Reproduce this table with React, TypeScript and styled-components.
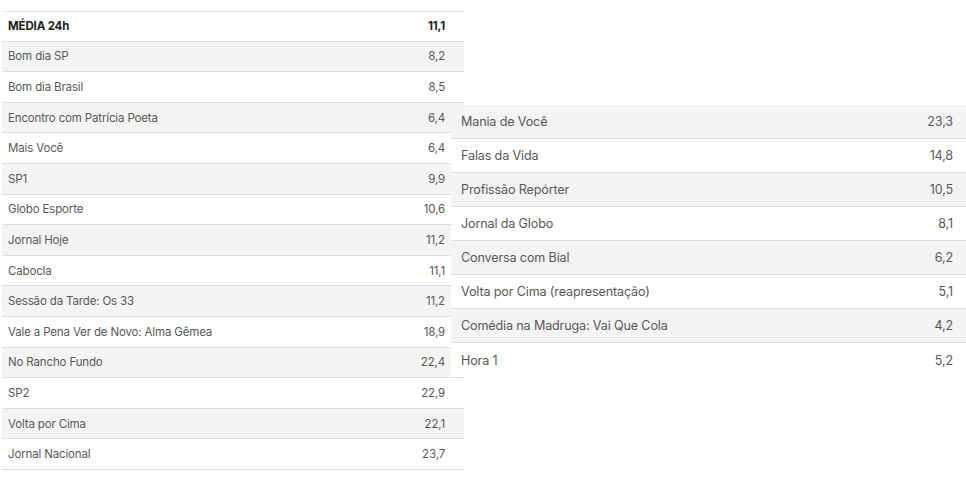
import React from "react";
import styled, { createGlobalStyle } from "styled-components";

const Global = createGlobalStyle`
  html, body { margin: 0; padding: 0; background: #ffffff; }
  body { font-family: Inter, "Noto Sans", "Liberation Sans", sans-serif; }
`;

const Page = styled.div`
  display: flex;
  align-items: flex-start;
  width: 966px;
  height: 483px;
  overflow: hidden;
`;

const Table = styled.div<{ $width: number; $top: number; $left: number }>`
  position: relative;
  width: ${(p) => p.$width}px;
  margin-top: ${(p) => p.$top}px;
  margin-left: ${(p) => p.$left}px;
  background: #ffffff;
  display: flex;
  flex-direction: column;
  flex-shrink: 0;
`;

const Row = styled.div<{
  $h: number;
  $shade: boolean;
  $size: number;
  $pl: number;
  $pr: number;
  $head?: boolean;
  $line: boolean;
  $topLine?: boolean;
}>`
  box-sizing: border-box;
  height: ${(p) => p.$h}px;
  display: flex;
  align-items: center;
  justify-content: space-between;
  padding: 0 ${(p) => p.$pr}px 0 ${(p) => p.$pl}px;
  background: ${(p) => (p.$shade ? "#f4f4f4" : "#ffffff")};
  border-bottom: ${(p) => (p.$line ? "1px solid #dedede" : "none")};
  border-top: ${(p) => (p.$topLine ? "1px solid #e6e6e6" : "none")};
  font-size: ${(p) => p.$size}px;
  font-weight: ${(p) => (p.$head ? 700 : 400)};
  color: ${(p) => (p.$head ? "#222222" : "#585858")};
  letter-spacing: -0.15px;
`;

const Label = styled.span``;
const Value = styled.span``;

const left: [string, string][] = [
  ["MÉDIA 24h", "11,1"],
  ["Bom dia SP", "8,2"],
  ["Bom dia Brasil", "8,5"],
  ["Encontro com Patrícia Poeta", "6,4"],
  ["Mais Você", "6,4"],
  ["SP1", "9,9"],
  ["Globo Esporte", "10,6"],
  ["Jornal Hoje", "11,2"],
  ["Cabocla", "11,1"],
  ["Sessão da Tarde: Os 33", "11,2"],
  ["Vale a Pena Ver de Novo: Alma Gêmea", "18,9"],
  ["No Rancho Fundo", "22,4"],
  ["SP2", "22,9"],
  ["Volta por Cima", "22,1"],
  ["Jornal Nacional", "23,7"],
];

const right: [string, string][] = [
  ["Mania de Você", "23,3"],
  ["Falas da Vida", "14,8"],
  ["Profissão Repórter", "10,5"],
  ["Jornal da Globo", "8,1"],
  ["Conversa com Bial", "6,2"],
  ["Volta por Cima (reapresentação)", "5,1"],
  ["Comédia na Madruga: Vai Que Cola", "4,2"],
  ["Hora 1", "5,2"],
];

export default function App() {
  return (
    <>
      <Global />
      <Page>
        <Table $width={462} $top={11} $left={2}>
          {left.map(([name, val], i) => (
            <Row
              key={name}
              $h={30.6}
              $shade={i % 2 === 1}
              $size={11.5}
              $pl={6}
              $pr={19}
              $head={i === 0}
              $line
              $topLine={i === 0}
            >
              <Label>{name}</Label>
              <Value>{val}</Value>
            </Row>
          ))}
        </Table>
        <Table $width={515} $top={105} $left={-13}>
          {right.map(([name, val], i) => (
            <Row
              key={name}
              $h={34}
              $shade={i % 2 === 0}
              $size={12.6}
              $pl={10}
              $pr={13}
              $line={i < right.length - 1}
            >
              <Label>{name}</Label>
              <Value>{val}</Value>
            </Row>
          ))}
        </Table>
      </Page>
    </>
  );
}
